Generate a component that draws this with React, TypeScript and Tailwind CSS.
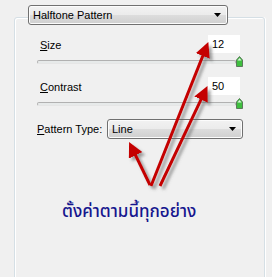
import React from 'react';

const ui = { fontFamily: '"Liberation Sans", Arial, sans-serif' };

function Combo({ label, className }: { label: string; className: string }) {
  return (
    <div
      className={`relative flex items-center h-[20px] rounded-[3px] border border-[#707070] bg-[linear-gradient(#f2f2f2_0%,#ebebeb_50%,#dddddd_50%,#cfcfcf_100%)] shadow-[inset_0_0_0_1px_#fcfcfc] ${className}`}
    >
      <span className="pl-[4px] text-[11px] text-black leading-none">{label}</span>
      <svg className="absolute right-[6px] top-[7px]" width="7" height="4" viewBox="0 0 7 4">
        <path d="M0 0 L7 0 L3.5 4 Z" fill="#000" />
      </svg>
    </div>
  );
}

function Slider() {
  return (
    <div className="flex items-center h-[11px] w-[206px]">
      <div className="w-[199px] h-[4px] rounded-[2px] border border-[#b1b1b1] border-b-[#e6e6e6] bg-[#e7eaea]" />
      <svg width="7" height="11" viewBox="0 0 7 11">
        <path d="M0.5 4 L3.5 0.5 L6.5 4 L6.5 10.5 L0.5 10.5 Z" fill="#3fbf3f" stroke="#5c7a5c" strokeWidth="1" />
        <path d="M1.5 4.5 L3.5 2 L5.5 4.5 Z" fill="#dff5df" />
      </svg>
    </div>
  );
}

function ValueRow({ label, first, value }: { label: string; first: string; value: string }) {
  return (
    <div className="flex items-center w-[206px] h-[18px]">
      <span className="ml-[3px] flex-1 text-[11px] leading-none text-black pt-[2px]">
        <span className="underline">{first}</span>
        {label}
      </span>
      <div className="w-[32px] h-[18px] mr-[3px] bg-white flex items-center pl-[4px] text-[11px] text-black">
        {value}
      </div>
    </div>
  );
}

export default function App() {
  return (
    <div className="relative w-[272px] h-[277px] overflow-hidden bg-[#f0f0f0]" style={ui}>
      <Combo label="Halftone Pattern" className="relative z-10 ml-[28px] mt-[5px] w-[200px]" />

      <div className="-mt-[8px] ml-[14px] w-[251px] h-[270px] rounded-[3px] border border-[#d5dfe5] shadow-[inset_1px_1px_0_#ffffff,1px_0_0_#ffffff]">
        <div className="pl-[22px] pt-[17px] flex flex-col">
          <ValueRow first="S" label="ize" value="12" />
          <div className="mt-[3px]">
            <Slider />
          </div>
          <div className="mt-[10px]">
            <ValueRow first="C" label="ontrast" value="50" />
          </div>
          <div className="mt-[3px]">
            <Slider />
          </div>
          <div className="mt-[10px] flex items-center">
            <span className="w-[70px] text-[11px] leading-none text-black">
              <span className="underline">P</span>attern Type:
            </span>
            <Combo label="Line" className="w-[136px]" />
          </div>
          <div
            className="mt-[65px] ml-[25px] text-[17px] leading-none font-medium text-[#16168e]"
            style={{ fontFamily: '"Noto Sans Thai", Tahoma, "DejaVu Sans", "Noto Sans", sans-serif' }}
          >
            ตั้งค่าตามนี้ทุกอย่าง
          </div>
        </div>
      </div>

      {/* red callout arrows drawn over the dialog */}
      <svg className="absolute inset-0 pointer-events-none" width="272" height="277" viewBox="0 0 272 277">
        <defs>
          <filter id="sh" x="-50%" y="-50%" width="200%" height="200%">
            <feDropShadow dx="3" dy="3" stdDeviation="1.6" floodColor="#555" floodOpacity="0.55" />
          </filter>
          <marker id="hd" markerUnits="userSpaceOnUse" markerWidth="17" markerHeight="15" refX="6" refY="7.5" orient="auto">
            <path d="M0 0 L15 7.5 L0 15 Z" fill="#c40000" />
          </marker>
        </defs>
        <g filter="url(#sh)" stroke="#c40000" strokeWidth="3" fill="none">
          <line x1="151" y1="186" x2="205" y2="50.4" markerEnd="url(#hd)" />
          <line x1="160" y1="186" x2="203.6" y2="94.2" markerEnd="url(#hd)" />
          <line x1="150" y1="185" x2="133" y2="150" markerEnd="url(#hd)" />
        </g>
      </svg>
    </div>
  );
}
